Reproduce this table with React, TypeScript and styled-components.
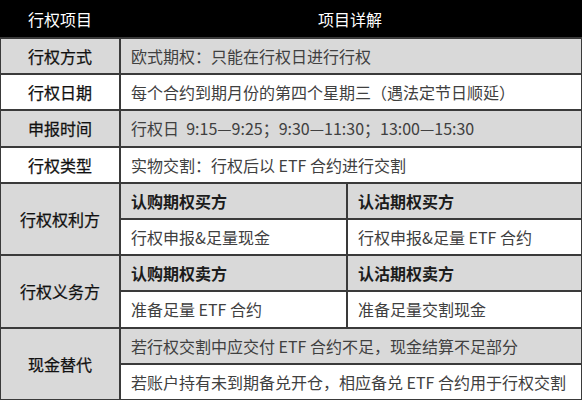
import React from 'react';
import styled, { createGlobalStyle } from 'styled-components';

const GlobalStyle = createGlobalStyle`
  html, body {
    margin: 0;
    padding: 0;
    background: #ffffff;
  }
  body {
    font-family: "Noto Sans CJK SC", "Noto Sans", sans-serif;
  }
`;

const LINE = '#3a3a3a';
const SHADE = '#d9d9d9';

const Table = styled.div`
  display: grid;
  grid-template-columns: 118px 225px 233px;
  grid-template-rows: 37px repeat(10, 1fr);
  gap: 2px;
  width: 582px;
  height: 400px;
  box-sizing: border-box;
  padding: 0 1px 1px 1px;
  background: ${LINE};
`;

const HeaderBar = styled.div`
  grid-column: 1 / -1;
  display: grid;
  grid-template-columns: 118px 1fr;
  align-items: center;
  background: #000000;
  margin: 0 -1px;
  padding: 0 1px;
`;

const HeadCell = styled.div`
  color: #ffffff;
  font-size: 16px;
  text-align: center;
`;

const LabelCell = styled.div<{ $shaded?: boolean; $span?: number }>`
  grid-column: 1;
  grid-row: span ${p => p.$span ?? 1};
  display: flex;
  align-items: center;
  justify-content: center;
  background: ${p => (p.$shaded ? SHADE : '#ffffff')};
  color: #111111;
  font-size: 16px;
  font-weight: 400;
  -webkit-text-stroke: 0.25px #111111;
`;

const DetailCell = styled.div<{ $shaded?: boolean; $wide?: boolean; $strong?: boolean }>`
  grid-column: ${p => (p.$wide ? '2 / 4' : 'auto')};
  display: flex;
  align-items: center;
  padding: 0 10px;
  background: ${p => (p.$shaded ? SHADE : '#ffffff')};
  color: ${p => (p.$strong ? '#1c1c1c' : '#404040')};
  font-size: 16px;
  font-weight: ${p => (p.$strong ? 700 : 400)};
  white-space: pre;
  overflow: hidden;
`;

type Row =
  | { kind: 'simple'; label: string; text: string; shaded: boolean }
  | { kind: 'split'; label: string; heads: [string, string]; body: [string, string] }
  | { kind: 'stack'; label: string; lines: [string, string] };

const rows: Row[] = [
  { kind: 'simple', label: '行权方式', text: '欧式期权：只能在行权日进行行权', shaded: true },
  { kind: 'simple', label: '行权日期', text: '每个合约到期月份的第四个星期三（遇法定节日顺延）', shaded: false },
  { kind: 'simple', label: '申报时间', text: '行权日  9:15—9:25；9:30—11:30；13:00—15:30', shaded: true },
  { kind: 'simple', label: '行权类型', text: '实物交割：行权后以 ETF 合约进行交割', shaded: false },
  {
    kind: 'split',
    label: '行权权利方',
    heads: ['认购期权买方', '认沽期权买方'],
    body: ['行权申报&足量现金', '行权申报&足量 ETF 合约'],
  },
  {
    kind: 'split',
    label: '行权义务方',
    heads: ['认购期权卖方', '认沽期权卖方'],
    body: ['准备足量 ETF 合约', '准备足量交割现金'],
  },
  {
    kind: 'stack',
    label: '现金替代',
    lines: ['若行权交割中应交付 ETF 合约不足，现金结算不足部分', '若账户持有未到期备兑开仓，相应备兑 ETF 合约用于行权交割'],
  },
];

export default function App() {
  return (
    <>
      <GlobalStyle />
      <Table>
        <HeaderBar>
          <HeadCell>行权项目</HeadCell>
          <HeadCell>项目详解</HeadCell>
        </HeaderBar>
        {rows.map(row => {
          if (row.kind === 'simple') {
            return (
              <React.Fragment key={row.label}>
                <LabelCell $shaded={row.shaded}>{row.label}</LabelCell>
                <DetailCell $shaded={row.shaded} $wide>{row.text}</DetailCell>
              </React.Fragment>
            );
          }
          if (row.kind === 'split') {
            return (
              <React.Fragment key={row.label}>
                <LabelCell $shaded $span={2}>{row.label}</LabelCell>
                <DetailCell $shaded $strong>{row.heads[0]}</DetailCell>
                <DetailCell $shaded $strong>{row.heads[1]}</DetailCell>
                <DetailCell>{row.body[0]}</DetailCell>
                <DetailCell>{row.body[1]}</DetailCell>
              </React.Fragment>
            );
          }
          return (
            <React.Fragment key={row.label}>
              <LabelCell $shaded $span={2}>{row.label}</LabelCell>
              <DetailCell $shaded $wide>{row.lines[0]}</DetailCell>
              <DetailCell $wide>{row.lines[1]}</DetailCell>
            </React.Fragment>
          );
        })}
      </Table>
    </>
  );
}
